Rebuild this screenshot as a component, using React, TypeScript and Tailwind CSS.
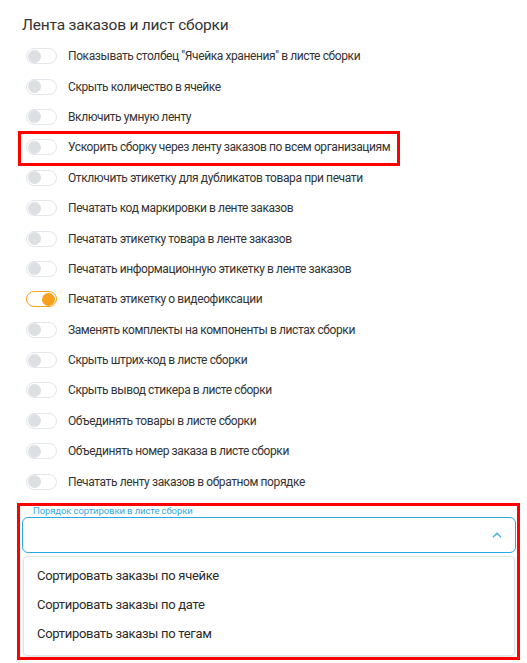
import { useState } from 'react';

const settings = [
  { label: 'Показывать столбец "Ячейка хранения" в листе сборки', on: false },
  { label: 'Скрыть количество в ячейке', on: false },
  { label: 'Включить умную ленту', on: false },
  { label: 'Ускорить сборку через ленту заказов по всем организациям', on: false, marked: true },
  { label: 'Отключить этикетку для дубликатов товара при печати', on: false },
  { label: 'Печатать код маркировки в ленте заказов', on: false },
  { label: 'Печатать этикетку товара в ленте заказов', on: false },
  { label: 'Печатать информационную этикетку в ленте заказов', on: false },
  { label: 'Печатать этикетку о видеофиксации', on: true },
  { label: 'Заменять комплекты на компоненты в листах сборки', on: false },
  { label: 'Скрыть штрих-код в листе сборки', on: false },
  { label: 'Скрыть вывод стикера в листе сборки', on: false },
  { label: 'Объединять товары в листе сборки', on: false },
  { label: 'Объединять номер заказа в листе сборки', on: false },
  { label: 'Печатать ленту заказов в обратном порядке', on: false },
];

const sortOptions = ['Сортировать заказы по ячейке', 'Сортировать заказы по дате', 'Сортировать заказы по тегам'];

function Toggle({ on }: { on: boolean }) {
  return (
    <span
      className={`flex shrink-0 items-center w-[31px] h-[16px] rounded-full border bg-white px-[1px] ${
        on ? 'border-[#f7a01d] justify-end' : 'border-[#e3e6ea] justify-start'
      }`}
    >
      <span className={`block rounded-full w-[13px] h-[13px] ${on ? 'bg-[#f7a01d]' : 'bg-[#dcdfe3]'}`} />
    </span>
  );
}

export default function App() {
  const [items] = useState(settings);

  return (
    <div className="w-[527px] h-[663px] bg-white pt-[14px] pl-[22px] pr-[7px] font-['Roboto',sans-serif] text-[#333]">
      <h2 className="text-[15.5px] leading-[22px] font-normal tracking-[-0.2px]">Лента заказов и лист сборки</h2>

      <ul className="mt-[5px]">
        {items.map((item, i) => (
          <li key={i} className="relative flex items-center h-[30.4px] pl-[4px] gap-[11px]">
            <Toggle on={item.on} />
            <span className="text-[12px] leading-none tracking-[-0.4px]">{item.label}</span>
            {item.marked && (
              <span className="absolute left-[-4px] top-[-1px] w-[382px] h-[35px] border-[3px] border-[#ff0000] pointer-events-none" />
            )}
          </li>
        ))}
      </ul>

      <div className="mt-[6px] -ml-[5px] border-[3px] border-[#ff0000] pl-[2px] pr-[1px] pb-[1px]">
        <div className="text-[9.5px] leading-[10px] text-[#33a9e4] pl-[11px] tracking-[-0.1px]">Порядок сортировки в листе сборки</div>
        <div className="mt-[1px] h-[36px] rounded-[6px] border border-[#29a8e3] flex items-center justify-end pr-[13px]">
          <svg width="10" height="6" viewBox="0 0 10 6" fill="none">
            <path d="M1 5.2L5 1.2L9 5.2" stroke="#3aaee6" strokeWidth="1.3" />
          </svg>
        </div>
        <div className="mt-[3px] mx-[1px] rounded-[4px] border border-[#e0e4e8] shadow-[0_1px_3px_rgba(0,0,0,0.12)] pt-[4.5px] pb-[6.5px]">
          {sortOptions.map((opt) => (
            <div key={opt} className="h-[29px] flex items-center pl-[13px] text-[13px] tracking-[-0.3px] text-[#2a2a2a]">
              {opt}
            </div>
          ))}
        </div>
      </div>
    </div>
  );
}
